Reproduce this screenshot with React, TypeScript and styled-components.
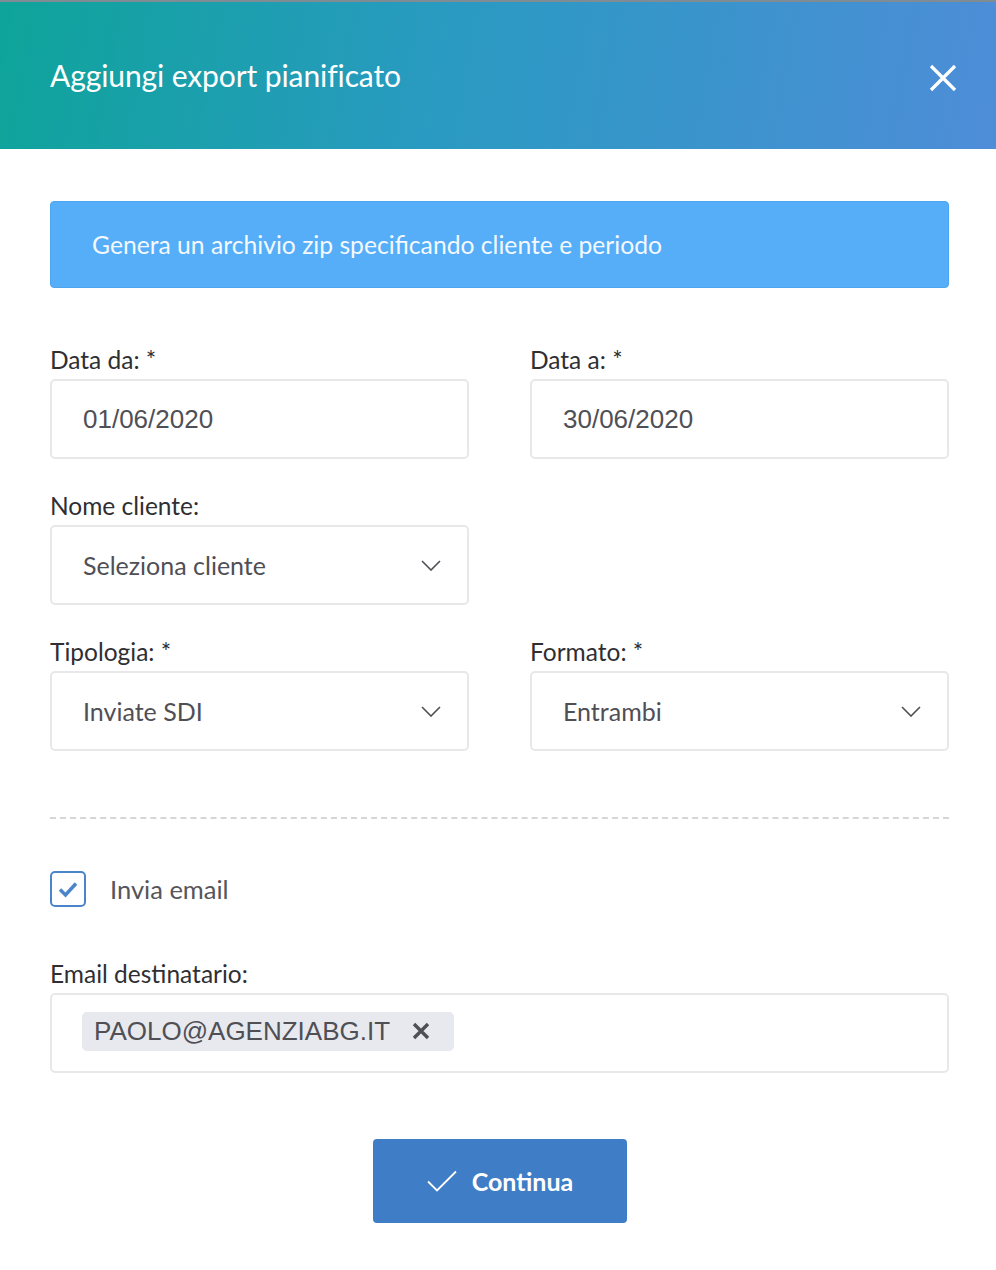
import React from "react";
import styled, { createGlobalStyle } from "styled-components";

const GlobalStyle = createGlobalStyle`
  html, body {
    margin: 0;
    padding: 0;
    background: #ffffff;
  }
  body {
    font-family: "Lato", "Open Sans", sans-serif;
  }
  * {
    box-sizing: border-box;
  }
`;

const Modal = styled.div`
  width: 996px;
  min-height: 1270px;
  background: #ffffff;
  border-top: 2px solid #7f8c93;
`;

const Header = styled.div`
  height: 147px;
  display: flex;
  align-items: center;
  justify-content: space-between;
  padding: 0 39px 0 50px;
  background: linear-gradient(100deg, #0ea49a 0%, #2a9ac2 45%, #4e8dd8 100%);
`;

const Title = styled.h1`
  margin: 0 0 2px;
  font-size: 30px;
  font-weight: 400;
  color: #ffffff;
  letter-spacing: -0.1px;
`;

const CloseButton = styled.button`
  border: none;
  background: transparent;
  padding: 0;
  margin-top: 5px;
  width: 28px;
  height: 28px;
  display: flex;
  cursor: pointer;
`;

const Body = styled.div`
  padding: 52px 47px 47px 50px;
`;

const Alert = styled.div`
  height: 87px;
  display: flex;
  align-items: center;
  padding: 0 41px;
  background: #55aef7;
  border: 1px solid #4ea5ee;
  border-radius: 4px;
  color: #f4f9ff;
  font-size: 24.7px;
  margin-bottom: 57px;
`;

const Grid = styled.div`
  display: grid;
  grid-template-columns: 419px 419px;
  column-gap: 61px;
  row-gap: 32px;
`;

const Field = styled.div`
  display: flex;
  flex-direction: column;
`;

const Label = styled.label`
  font-size: 24.5px;
  line-height: 30px;
  color: #2f2f33;
  margin-bottom: 4px;
`;

const Box = styled.div`
  height: 80px;
  display: flex;
  align-items: center;
  justify-content: space-between;
  padding: 0 26px 0 31px;
  border: 2px solid #e8e8ea;
  border-radius: 5px;
  background: #ffffff;
`;

const BoxText = styled.span<{ $mono?: boolean }>`
  font-family: ${(p) =>
    p.$mono ? '"Liberation Sans", Arial, sans-serif' : '"Lato", sans-serif'};
  font-size: ${(p) => (p.$mono ? "26px" : "25px")};
  color: #4f4f55;
`;

const Divider = styled.hr`
  margin: 66px 0 52px;
  border: none;
  border-top: 2px dashed #d6d6d8;
`;

const CheckRow = styled.label`
  display: flex;
  align-items: center;
  gap: 24px;
  height: 36px;
  line-height: 36px;
  font-size: 25.5px;
  color: #55555b;
  margin-bottom: 52px;
`;

const CheckBox = styled.span`
  width: 36px;
  height: 36px;
  border: 2px solid #4a85c9;
  border-radius: 5px;
  display: flex;
  align-items: center;
  justify-content: center;
`;

const TagBox = styled(Box)`
  justify-content: flex-start;
  padding-bottom: 4px;
`;

const Tag = styled.span`
  display: inline-flex;
  align-items: center;
  gap: 22px;
  height: 39px;
  padding: 0 24px 0 12px;
  margin-left: -1px;
  background: #e8e9ef;
  border-radius: 5px;
  font-family: "Liberation Sans", Arial, sans-serif;
  font-size: 26px;
  color: #4f4f55;
`;

const Footer = styled.div`
  display: flex;
  justify-content: center;
  margin-top: 66px;
`;

const PrimaryButton = styled.button`
  width: 254px;
  height: 84px;
  display: flex;
  align-items: center;
  justify-content: center;
  gap: 14px;
  border: none;
  border-radius: 4px;
  background: #3f7ec6;
  color: #ffffff;
  font-family: "Lato", sans-serif;
  font-size: 25px;
  font-weight: 700;
  cursor: pointer;
`;

const Chevron = () => (
  <svg width="20" height="11" viewBox="0 0 20 11" fill="none">
    <polyline points="1,1 10,10 19,1" stroke="#4f4f55" strokeWidth="1.6" />
  </svg>
);

const Select: React.FC<{ value: string }> = ({ value }) => (
  <Box>
    <BoxText>{value}</BoxText>
    <Chevron />
  </Box>
);

const App: React.FC = () => {
  return (
    <>
      <GlobalStyle />
      <Modal>
        <Header>
          <Title>Aggiungi export pianificato</Title>
          <CloseButton aria-label="Chiudi">
            <svg width="28" height="28" viewBox="0 0 28 28">
              <path d="M2 2 26 26M26 2 2 26" stroke="#ffffff" strokeWidth="3.2" />
            </svg>
          </CloseButton>
        </Header>
        <Body>
          <Alert>Genera un archivio zip specificando cliente e periodo</Alert>
          <Grid>
            <Field>
              <Label>Data da: *</Label>
              <Box>
                <BoxText $mono>01/06/2020</BoxText>
              </Box>
            </Field>
            <Field>
              <Label>Data a: *</Label>
              <Box>
                <BoxText $mono>30/06/2020</BoxText>
              </Box>
            </Field>
            <Field>
              <Label>Nome cliente:</Label>
              <Select value="Seleziona cliente" />
            </Field>
            <div />
            <Field>
              <Label>Tipologia: *</Label>
              <Select value="Inviate SDI" />
            </Field>
            <Field>
              <Label>Formato: *</Label>
              <Select value="Entrambi" />
            </Field>
          </Grid>
          <Divider />
          <CheckRow>
            <CheckBox>
              <svg width="22" height="18" viewBox="0 0 22 18">
                <path
                  d="M3 9.5 8.5 15 19 3.5"
                  stroke="#4a85c9"
                  strokeWidth="3.4"
                  fill="none"
                />
              </svg>
            </CheckBox>
            Invia email
          </CheckRow>
          <Field>
            <Label>Email destinatario:</Label>
            <TagBox>
              <Tag>
                PAOLO@AGENZIABG.IT
                <svg width="18" height="18" viewBox="0 0 18 18">
                  <path d="M2 2 16 16M16 2 2 16" stroke="#4f4f55" strokeWidth="3.4" />
                </svg>
              </Tag>
            </TagBox>
          </Field>
          <Footer>
            <PrimaryButton>
              <svg width="32" height="24" viewBox="0 0 32 24" fill="none">
                <path d="M2 12.5 11 21.5 30 2.5" stroke="#ffffff" strokeWidth="1.8" />
              </svg>
              Continua
            </PrimaryButton>
          </Footer>
        </Body>
      </Modal>
    </>
  );
};

export default App;
